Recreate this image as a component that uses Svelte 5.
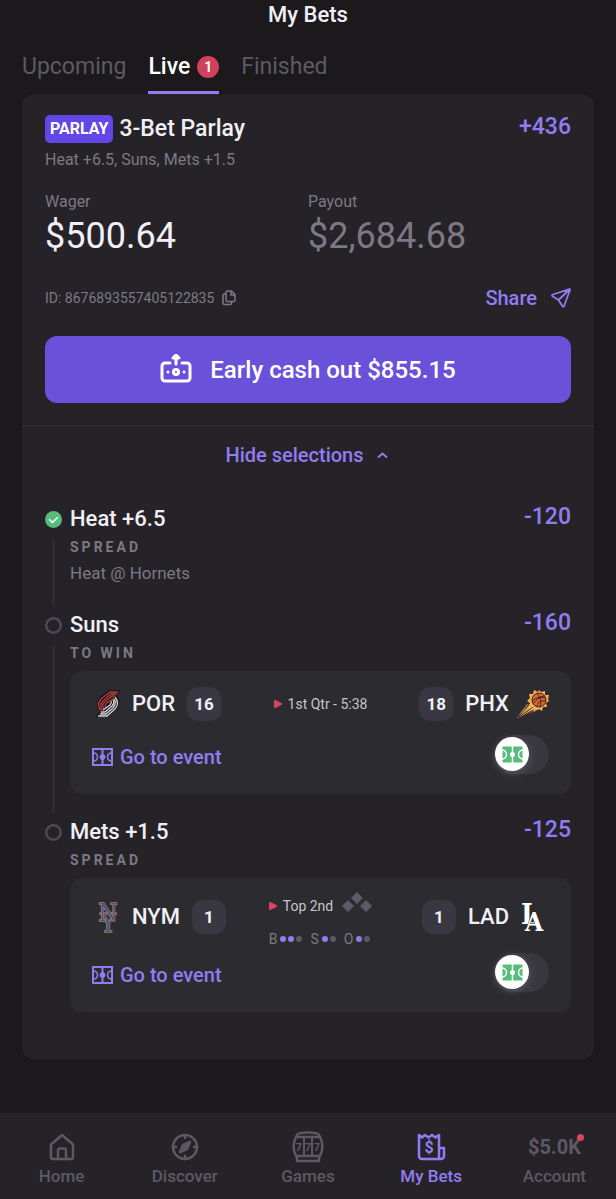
<script>
    let showSelections = true;

    const tabs = [
        { name: 'Upcoming' },
        { name: 'Live', count: 1, active: true },
        { name: 'Finished' }
    ];

    const selections = [
        { title: 'Heat +6.5', market: 'Spread', odds: '-120', game: 'Heat @ Hornets', won: true },
        {
            title: 'Suns',
            market: 'To win',
            odds: '-160',
            event: {
                home: 'POR',
                homeScore: 16,
                away: 'PHX',
                awayScore: 18,
                clock: '1st Qtr - 5:38'
            }
        },
        {
            title: 'Mets +1.5',
            market: 'Spread',
            odds: '-125',
            event: {
                home: 'NYM',
                homeScore: 1,
                away: 'LAD',
                awayScore: 1,
                clock: 'Top 2nd',
                // balls, strikes, outs
                counts: [
                    { key: 'B', dots: [true, true, false] },
                    { key: 'S', dots: [true, false] },
                    { key: 'O', dots: [true, false] }
                ]
            }
        }
    ];

    const nav = ['Home', 'Discover', 'Games', 'My Bets', 'Account'];
</script>

{#snippet logo(team)}
    <svg class="logo" width="32" height="32" viewBox="0 0 32 32" aria-hidden="true">
        {#if team === 'POR'}
            <path d="M28 2H17L8 9Q2 17 8 23l-4 6h12l8-7q6-7 1-14z" fill="#151316" />
            <g fill="none" stroke-width="1.300">
                <g stroke="#b5403f">
                    <path d="M26 4h-8L9 11q-5 6 0 12" />
                    <path d="M25 6h-6l-8 7q-4 4-1 9" />
                    <path d="M23 8h-3l-7 6q-4 3-1 7" />
                    <path d="M22 10l-7 5q-3 2-1 5" />
                </g>
                <g stroke="#d6d4d8">
                    <path d="M6 28h9l8-7q5-6 0-12" />
                    <path d="M8 26h6l7-6q4-5 1-9" />
                    <path d="M9 24h4l7-6q3-3 1-6" />
                    <path d="M11 22l7-5q2-2 1-4" />
                </g>
            </g>
        {:else if team === 'PHX'}
            <path d="M0 30l9-13 9-4 5 8-9 4z" fill="#efaa55" />
            <path d="M1 29L14 15M2 29l14-10M4 29l14-8M8 27l12-5M5 22l8-7" stroke="#2c2b2f" stroke-width="1" />
            <path d="M12 18l5-7M12 21l7-7M14 22l8-7" stroke="#ffe2a0" stroke-width="1" />
            <path d="M22 2l2 2 4-1 0 4 4 0-1 4 1 2-3 2 1 4-4 0-1 4-4-3-4 4-1-5-4 1 1-5-3-2 3-3-1-4 4 0 1-4 4 2z" fill="#f6b250" />
            <circle cx="22" cy="12" r="7" fill="#de6a32" stroke="#372323" />
            <path d="M15 13c5-4 10-5 14-2M19 5c4 3 6 8 4 14M16 16c4-5 8-8 12-8M20 19c0-4 3-7 9-6" fill="none" stroke="#372323" />
        {:else if team === 'NYM'}
            <g font-family="DejaVu Serif Condensed, DejaVu Serif, serif" fill="#2e5c9c" stroke="#bd7545" stroke-width="1.500" paint-order="stroke" text-anchor="middle">
                <text x="16" y="31" font-size="26">Y</text>
                <text x="16" y="20" font-size="24">N</text>
            </g>
        {:else}
            <g font-family="DejaVu Serif Condensed, DejaVu Serif, serif" font-weight="700" fill="#fff" stroke="#2c2b2f" stroke-width="1" paint-order="stroke">
                <text x="4" y="23" font-size="28">L</text>
                <text x="8" y="30" font-size="26">A</text>
            </g>
        {/if}
    </svg>
{/snippet}

{#snippet team(name, score, away)}
    <div class="team" class:away>
        {@render logo(name)}
        <span class="abbr">{name}</span>
        <span class="score">{score}</span>
    </div>
{/snippet}

{#snippet navIcon(name)}
    <svg width="32" height="32" viewBox="0 0 32 32" fill="none" stroke="currentColor" stroke-width="2.500" stroke-linejoin="round" stroke-linecap="round" aria-hidden="true">
        {#if name === 'Home'}
            <path d="M5 13.500L16 4l11 9.500V26a2 2 0 0 1-2 2H7a2 2 0 0 1-2-2z" />
            <path d="M12 28v-8.500a2 2 0 0 1 2-2h4a2 2 0 0 1 2 2V28" />
        {:else if name === 'Discover'}
            <circle cx="16" cy="16" r="12" />
            <path d="M16 4v3M16 25v3M4 16h3M25 16h3M21 11l-3 7-7 3 3-7z" />
            <path d="M15 17l2-2" />
        {:else if name === 'Games'}
            <path d="M5 4C6 2 10 1.500 16 1.500S26 2 27 4M4 6h24c3 6 3 13 0 19H4C1 19 1 12 4 6zM4 6l1-2M28 6l-1-2M5 25v5h22v-5" />
            <path d="M12 6v19M20 6v19" stroke-width="2" />
            <g fill="currentColor" stroke="none" font-family="Roboto, sans-serif" font-size="11" font-weight="700" text-anchor="middle">
                <text x="7" y="20">7</text>
                <text x="16" y="20">7</text>
                <text x="25" y="20">7</text>
            </g>
        {:else}
            <path d="M4 4l3 2.500L10 4l3.500 2.500L17 4l3.500 2.500L24 4v24H7a3 3 0 0 1-3-3zM24 17h5v8a3 3 0 0 1-3 3h-3" />
            <text x="14" y="22" fill="currentColor" stroke="none" font-family="Roboto, sans-serif" font-size="16" font-weight="700" text-anchor="middle">$</text>
        {/if}
    </svg>
{/snippet}

<div class="page">
    <h1>My Bets</h1>

    <div class="tabs">
        {#each tabs as tab}
            <button class="tab" class:active={tab.active}>
                {tab.name}
                {#if tab.count}<span class="count">{tab.count}</span>{/if}
            </button>
        {/each}
    </div>

    <main class="card">
        <section class="summary">
            <div class="row">
                <h2><span class="tag">PARLAY</span>3-Bet Parlay</h2>
                <span class="odds">+436</span>
            </div>
            <p class="legs">Heat +6.5, Suns, Mets +1.5</p>

            <div class="amounts">
                <div>
                    <div class="caption">Wager</div>
                    <div class="amount">$500.64</div>
                </div>
                <div>
                    <div class="caption">Payout</div>
                    <div class="amount muted">$2,684.68</div>
                </div>
            </div>

            <div class="row meta">
                <button class="id">
                    ID: 8676893557405122835
                    <svg width="14" height="16" viewBox="0 0 14 16" fill="none" stroke="currentColor" stroke-width="1.500" stroke-linejoin="round" aria-hidden="true">
                        <path d="M5.500 1h4L13 4.500V10a1.500 1.500 0 0 1-1.500 1.500h-6A1.500 1.500 0 0 1 4 10V2.500A1.500 1.500 0 0 1 5.500 1zM9 1v4h4M4 4H2.500A1.500 1.500 0 0 0 1 5.500V13a1.500 1.500 0 0 0 1.500 1.500H8A1.500 1.500 0 0 0 9.500 13v-1.500" />
                    </svg>
                </button>
                <button class="share">
                    Share
                    <svg width="20" height="20" viewBox="0 0 20 20" fill="none" stroke="currentColor" stroke-width="1.800" stroke-linejoin="round" stroke-linecap="round" aria-hidden="true">
                        <path d="M18.500 1.200L1.800 6.500Q.5 7 1.500 8.200L7.500 12l4 6.300q1 1 1.600-.3L19 2q.2-1-.5-.8zM7.500 12L18.500 1.500" />
                    </svg>
                </button>
            </div>

            <button class="cashout">
                <svg width="32" height="32" viewBox="0 2 32 32" fill="none" stroke="currentColor" stroke-width="3" stroke-linejoin="round" stroke-linecap="round" aria-hidden="true">
                    <path d="M10 11H5a3 3 0 0 0-3 3v12a3 3 0 0 0 3 3h22a3 3 0 0 0 3-3V14a3 3 0 0 0-3-3h-5" />
                    <path d="M16 12V4M13 6l3-3 3 3z" />
                    <circle cx="16" cy="20" r="2.500" />
                    <path d="M8 20h.01M24 20h.01" />
                </svg>
                Early cash out $855.15
            </button>
        </section>

        <button class="toggle-selections" on:click={() => (showSelections = !showSelections)}>
            {showSelections ? 'Hide' : 'Show'} selections
            <svg class:flipped={!showSelections} width="16" height="6" viewBox="0 0 16 6" fill="none" stroke="currentColor" stroke-width="2" aria-hidden="true">
                <path d="M3 5.500l4.500-4 4.500 4" />
            </svg>
        </button>

        {#if showSelections}
            <ul class="selections">
                {#each selections as pick}
                    <li>
                        <div class="rail">
                            <span class="marker">
                                <svg width="17" height="17" viewBox="0 0 17 17" fill="none" stroke-width="2" aria-hidden="true">
                                    {#if pick.won}
                                        <circle cx="8.500" cy="8.500" r="8.500" fill="#55bd79" />
                                        <path d="M4.500 8.500l3 3 5-5" stroke="#fff" stroke-linecap="round" stroke-linejoin="round" stroke-width="1.500" />
                                    {:else}
                                        <circle cx="8.500" cy="8.500" r="7.300" stroke="#4c4a55" stroke-width="2.400" />
                                    {/if}
                                </svg>
                            </span>
                            <span class="line"></span>
                        </div>

                        <div class="pick">
                            <div class="row">
                                <h3>{pick.title}</h3>
                                <span class="odds">{pick.odds}</span>
                            </div>
                            <div class="market">{pick.market}</div>

                            {#if pick.game}
                                <p class="game">{pick.game}</p>
                            {/if}

                            {#if pick.event}
                                <div class="event">
                                    <div class="teams" class:baseball={pick.event.counts}>
                                        {@render team(pick.event.home, pick.event.homeScore, false)}
                                        <div class="status">
                                            <div class="clock">
                                                <svg width="8" height="10" viewBox="0 0 8 10" aria-hidden="true">
                                                    <path d="M1 2v6l6-3z" fill="#d9445f" stroke="#d9445f" stroke-width="2" stroke-linejoin="round" />
                                                </svg>
                                                {pick.event.clock}
                                                {#if pick.event.counts}
                                                    <svg class="bases" width="30" height="28" viewBox="0 0 30 28" fill="#5c5a68" aria-hidden="true">
                                                        <path d="M15 0l6 6-6 6-6-6zM6 8l6 6-6 6-6-6zM24 8l6 6-6 6-6-6z" />
                                                    </svg>
                                                {/if}
                                            </div>
                                            {#if pick.event.counts}
                                                <div class="counts">
                                                    {#each pick.event.counts as count}
                                                        <span class="pitch">
                                                            {count.key}
                                                            <span class="dots">
                                                                {#each count.dots as on}<i class:on></i>{/each}
                                                            </span>
                                                        </span>
                                                    {/each}
                                                </div>
                                            {/if}
                                        </div>
                                        {@render team(pick.event.away, pick.event.awayScore, true)}
                                    </div>

                                    <div class="row actions">
                                        <a href="#event">
                                            <svg width="21" height="18" viewBox="0 0 21 18" fill="none" stroke="currentColor" stroke-width="2" aria-hidden="true">
                                                <path d="M1 1h19v16H1zM10.500 1v16" />
                                                <path d="M1 5c6 0 6 8 0 8M20 5c-6 0-6 8 0 8" stroke-width="1.500" />
                                                <circle cx="10.500" cy="9" r="2.500" fill="currentColor" stroke-width="1" />
                                            </svg>
                                            Go to event
                                        </a>
                                        <label class="switch">
                                            <input type="checkbox" aria-label="Show live tracker for {pick.title}" />
                                            <span class="knob">
                                                <svg width="21" height="17" viewBox="0 0 21 17" fill="none" stroke="#fff" aria-hidden="true">
                                                    <rect width="21" height="17" rx="1" fill="#55bd79" />
                                                    <path d="M10.500 0v17M0 4c6 0 6 9 0 9M21 4c-6 0-6 9 0 9" stroke-width="1.500" />
                                                    <circle cx="10.500" cy="8.500" r="2.500" fill="#fff" stroke="none" />
                                                </svg>
                                            </span>
                                        </label>
                                    </div>
                                </div>
                            {/if}
                        </div>
                    </li>
                {/each}
            </ul>
        {/if}
    </main>

    <nav>
        {#each nav as item}
            <a href="#{item}" class:current={item === 'My Bets'}>
                <span class="icon">
                    {#if item === 'Account'}
                        <span class="balance">$5.0K</span>
                    {:else}
                        {@render navIcon(item)}
                    {/if}
                </span>
                {item}
            </a>
        {/each}
    </nav>
</div>

<style>
    :global(body) {
        background: #1b191c;
    }

    .page {
        min-height: 100vh;
        display: flex;
        flex-direction: column;
        color: #f1eff5;
        font-family: Roboto, "Liberation Sans", sans-serif;
    }

    h1, h2, h3, p, ul {
        margin: 0;
        padding: 0;
    }

    h1, h2, h3 {
        font-size: 22px;
        line-height: 28px;
        font-weight: 500;
    }

    h1 {
        line-height: 30px;
        text-align: center;
    }

    svg {
        display: block;
        flex: none;
    }

    button {
        border: none;
        background: none;
        padding: 0;
        font: inherit;
        color: inherit;
        cursor: pointer;
    }

    a {
        text-decoration: none;
    }

    .logo {
        overflow: visible;
    }

    .tabs {
        display: flex;
        gap: 22px;
        margin: 8px 22px 0;
    }

    .tab {
        display: flex;
        align-items: center;
        gap: 7px;
        padding: 15px 0 10px;
        border-bottom: 3px solid transparent;
        color: #5c5965;
        font-size: 23px;
        line-height: 28px;
    }

    .tab.active {
        color: #fff;
        font-weight: 500;
        border-color: #927cf2;
    }

    .count {
        width: 22px;
        height: 22px;
        border-radius: 50%;
        background: #d0415a;
        font-size: 14px;
        line-height: 22px;
        font-weight: 700;
    }

    .card {
        margin: 0 22px 54px;
        padding-bottom: 23px;
        border-radius: 12px;
        background: #252328;
    }

    .summary {
        padding: 21px 23px 22px;
        border-bottom: 2px solid #2c2b2f;
    }

    .row {
        display: flex;
        justify-content: space-between;
    }

    h2 {
        display: flex;
        gap: 6px;
        font-size: 23px;
    }

    .tag {
        padding: 0 5px;
        border-radius: 5px;
        background: #6246e8;
        color: #fff;
        font-size: 16px;
        font-weight: 700;
    }

    .odds {
        color: #927cf2;
        font-size: 23px;
        line-height: 23px;
        font-weight: 500;
    }

    .legs, .caption {
        color: #7c7985;
        font-size: 16px;
        line-height: 20px;
    }

    .legs {
        margin-top: 7px;
    }

    .amounts {
        display: grid;
        grid-template-columns: 1fr 1fr;
        margin-top: 22px;
    }

    .amount {
        margin-top: 4px;
        font-size: 36px;
        line-height: 40px;
    }

    .muted {
        color: #7c7985;
    }

    .meta {
        align-items: center;
        margin-top: 30px;
    }

    .id, .share {
        display: flex;
        align-items: center;
        line-height: 24px;
    }

    .id {
        gap: 8px;
        color: #7c7985;
        font-size: 14px;
    }

    .share {
        gap: 14px;
        color: #927cf2;
        font-size: 20px;
        font-weight: 500;
    }

    .cashout {
        display: flex;
        align-items: center;
        justify-content: center;
        gap: 18px;
        width: 100%;
        height: 67px;
        margin-top: 26px;
        border-radius: 12px;
        background: #6951d9;
        color: #fff;
        font-size: 24px;
        font-weight: 500;
    }

    .toggle-selections {
        display: flex;
        align-items: center;
        justify-content: center;
        gap: 11px;
        width: 100%;
        padding: 16px 0;
        color: #927cf2;
        font-size: 20px;
        line-height: 24px;
        font-weight: 500;
    }

    .flipped {
        transform: rotate(180deg);
    }

    .selections {
        padding: 22px 23px 0;
        list-style: none;
    }

    li {
        display: flex;
        gap: 8px;
    }

    .rail {
        display: flex;
        flex-direction: column;
        align-items: center;
    }

    .marker {
        display: flex;
        align-items: center;
        height: 28px;
    }

    .line {
        flex: 1;
        width: 3px;
        margin: 6px 0 5px;
        border-radius: 2px;
        background: #2e2c31;
    }

    li:last-child .line {
        visibility: hidden;
    }

    .pick {
        flex: 1;
        padding-bottom: 24px;
    }

    .market {
        margin-top: 4px;
        color: #7c7985;
        font-size: 14px;
        line-height: 20px;
        font-weight: 700;
        letter-spacing: 3px;
        text-transform: uppercase;
    }

    .game {
        margin: 6px 0 4px;
        color: #7c7985;
        font-size: 17px;
        line-height: 20px;
    }

    .event {
        margin-top: 8px;
        padding: 16px 22px 20px;
        border-radius: 12px;
        background: #2c2b2f;
    }

    .teams {
        display: grid;
        grid-template-columns: 1fr auto 1fr;
        align-items: center;
    }

    /* the pitch count hangs below the team row */
    .teams.baseball {
        grid-template-rows: 45px;
    }

    .team {
        display: flex;
        align-items: center;
    }

    .team.away {
        flex-direction: row-reverse;
    }

    .abbr {
        margin: 0 12px 0 8px;
        font-size: 22px;
        line-height: 28px;
        font-weight: 500;
    }

    .away .abbr {
        margin: 0 8px 0 12px;
    }

    .score {
        width: 34px;
        border-radius: 11px;
        background: #383742;
        font-size: 17px;
        line-height: 34px;
        font-weight: 700;
        text-align: center;
    }

    .baseball .status {
        align-self: start;
    }

    .clock {
        display: flex;
        align-items: center;
        gap: 6px;
        height: 24px;
        color: #c6c4cc;
        font-size: 14px;
        line-height: 24px;
    }

    .bases {
        margin-left: 3px;
    }

    .counts {
        display: flex;
        gap: 8px;
        margin-top: 12px;
        color: #7c7985;
        font-size: 14px;
        line-height: 18px;
    }

    .pitch, .dots {
        display: flex;
        align-items: center;
        gap: 2px;
    }

    .pitch {
        gap: 3px;
    }

    i {
        width: 6px;
        height: 6px;
        border-radius: 50%;
        background: #5c5965;
    }

    i.on {
        background: #927cf2;
    }

    .actions {
        align-items: center;
        margin-top: 14px;
    }

    .actions a {
        display: flex;
        align-items: center;
        gap: 7px;
        padding-top: 4px;
        color: #927cf2;
        font-size: 20px;
        line-height: 24px;
        font-weight: 500;
    }

    .switch {
        position: relative;
        width: 55px;
        height: 39px;
    }

    .switch input {
        appearance: none;
        display: block;
        width: 100%;
        height: 100%;
        margin: 0;
        border-radius: 20px;
        background: #383742;
        cursor: pointer;
    }

    .knob {
        position: absolute;
        top: 2px;
        left: 1px;
        display: flex;
        align-items: center;
        justify-content: center;
        width: 34px;
        height: 34px;
        border-radius: 50%;
        background: #fff;
        box-shadow: 0 2px 8px #ffffff30;
        pointer-events: none;
    }

    .switch input:checked + .knob {
        left: 20px;
    }

    nav {
        display: grid;
        grid-template-columns: repeat(5, 1fr);
        margin-top: auto;
        padding: 18px 0 13px;
        background: #252328;
    }

    nav a {
        display: flex;
        flex-direction: column;
        align-items: center;
        gap: 3px;
        color: #5c5965;
        font-size: 17px;
        line-height: 20px;
        font-weight: 500;
    }

    nav a.current {
        color: #927cf2;
    }

    .icon {
        display: flex;
        align-items: center;
        height: 32px;
    }

    .balance {
        position: relative;
        font-size: 20px;
        font-weight: 700;
    }

    .balance::after {
        content: "";
        position: absolute;
        top: -3px;
        right: -3px;
        width: 7px;
        height: 7px;
        border-radius: 50%;
        background: #e0445e;
    }
</style>
